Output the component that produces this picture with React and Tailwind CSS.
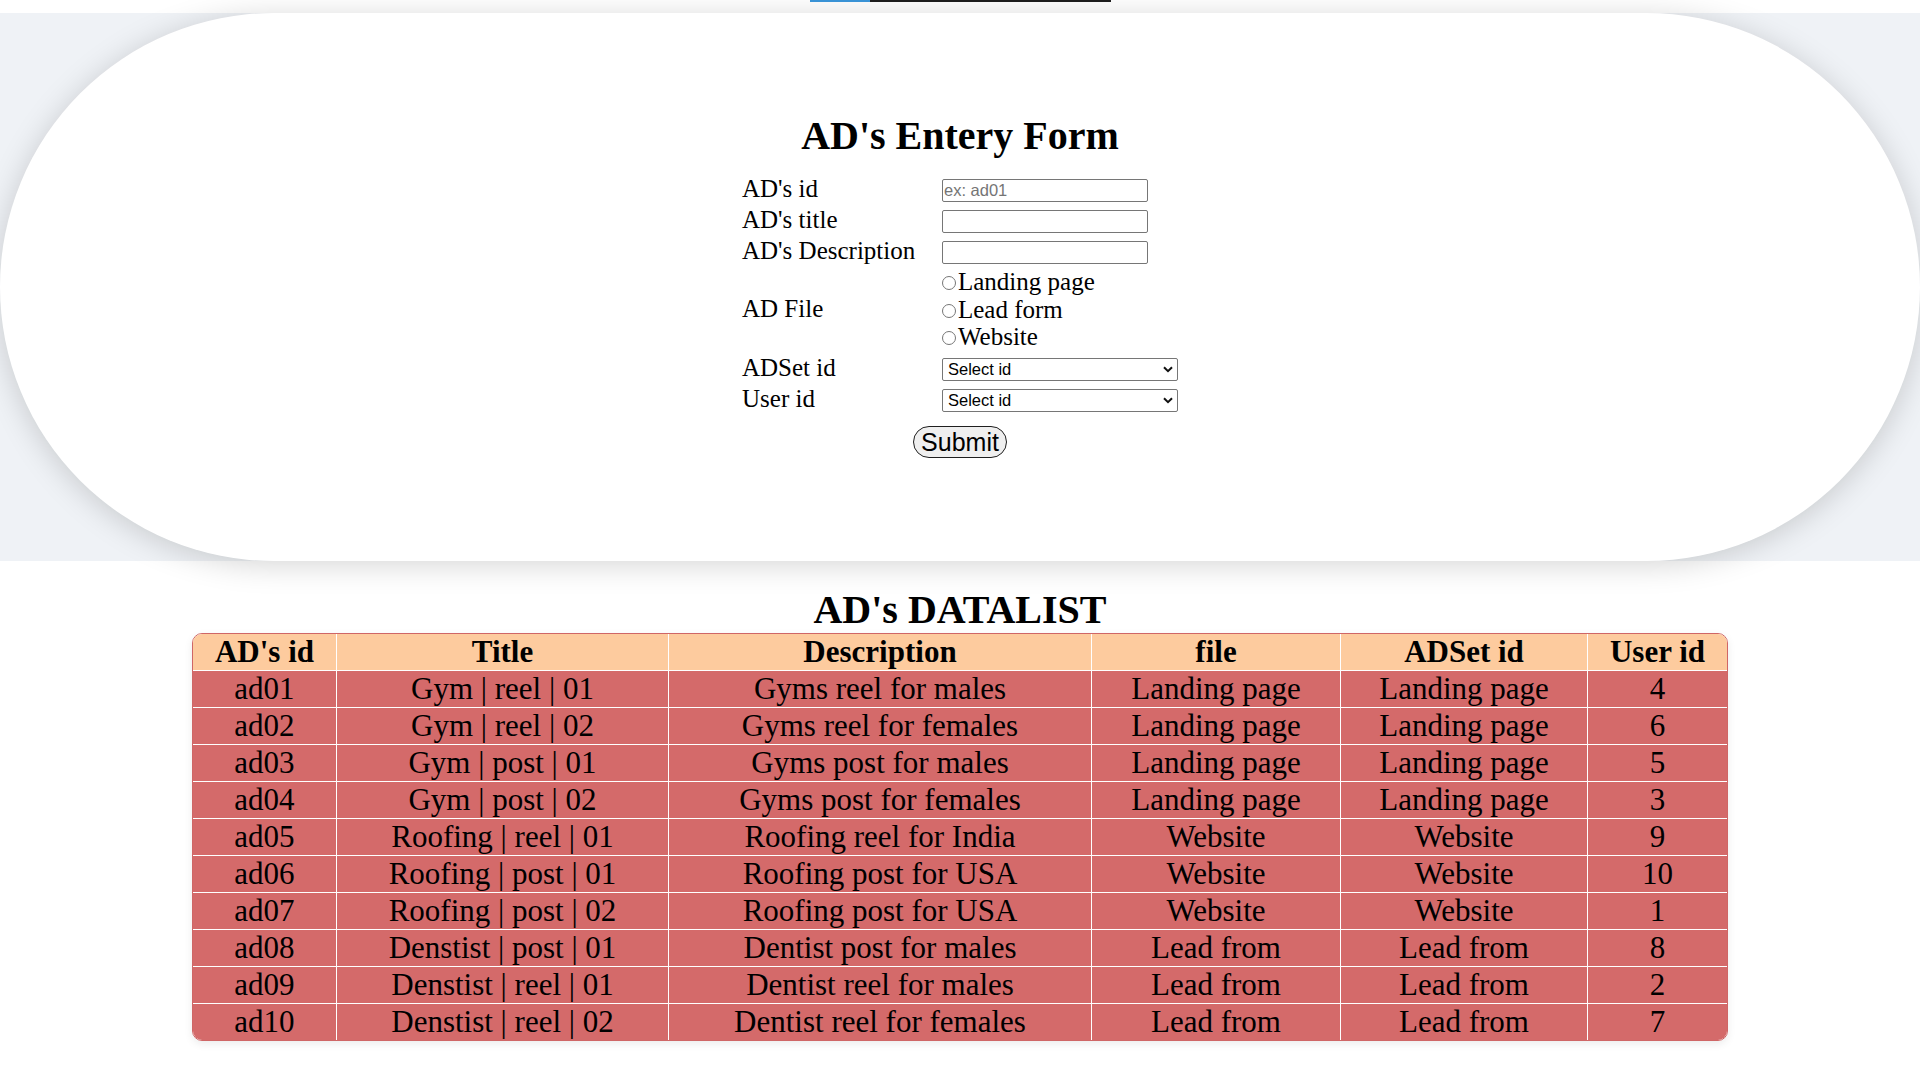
import { useState } from 'react'

const ROWS = [
  ['ad01', 'Gym | reel | 01', 'Gyms reel for males', 'Landing page', 'Landing page', '4'],
  ['ad02', 'Gym | reel | 02', 'Gyms reel for females', 'Landing page', 'Landing page', '6'],
  ['ad03', 'Gym | post | 01', 'Gyms post for males', 'Landing page', 'Landing page', '5'],
  ['ad04', 'Gym | post | 02', 'Gyms post for females', 'Landing page', 'Landing page', '3'],
  ['ad05', 'Roofing | reel | 01', 'Roofing reel for India', 'Website', 'Website', '9'],
  ['ad06', 'Roofing | post | 01', 'Roofing post for USA', 'Website', 'Website', '10'],
  ['ad07', 'Roofing | post | 02', 'Roofing post for USA', 'Website', 'Website', '1'],
  ['ad08', 'Denstist | post | 01', 'Dentist post for males', 'Lead from', 'Lead from', '8'],
  ['ad09', 'Denstist | reel | 01', 'Dentist reel for males', 'Lead from', 'Lead from', '2'],
  ['ad10', 'Denstist | reel | 02', 'Dentist reel for females', 'Lead from', 'Lead from', '7'],
]

const HEADERS = ["AD's id", 'Title', 'Description', 'file', 'ADSet id', 'User id']
const COLS = [144, 332, 423, 249, 247, 139]

function TextField({ placeholder }) {
  return (
    <input
      type="text"
      placeholder={placeholder}
      className="block w-[206px] h-[23px] m-0 px-[1px] border border-[#767676] rounded-[2px] bg-white font-['Liberation_Sans',Arial,sans-serif] text-[16.5px] text-black placeholder:text-[#757575] outline-none"
    />
  )
}

function SelectField() {
  return (
    <div className="relative w-[236px] h-[23px]">
      <select className="block appearance-none w-full h-full m-0 pl-[5px] border border-[#767676] rounded-[2px] bg-white font-['Liberation_Sans',Arial,sans-serif] text-[16.5px] leading-[21px] text-black outline-none">
        <option>Select id</option>
      </select>
      {/* chevron */}
      <svg className="absolute right-[5px] top-[8px] pointer-events-none" width="10" height="7" viewBox="0 0 10 7">
        <path d="M1 1.2l4 4 4-4" fill="none" stroke="#111" strokeWidth="2" />
      </svg>
    </div>
  )
}

export default function App() {
  const [file, setFile] = useState('')

  return (
    <div className="min-h-screen bg-white text-black font-['Liberation_Serif','Times_New_Roman',serif]">
      {/* top strip */}
      <div className="h-[13px] flex justify-center">
        <div className="w-[301px] h-[2px] flex">
          <div className="w-[60px] bg-[#3a93d6]" />
          <div className="flex-1 bg-[#1e1e1e]" />
        </div>
      </div>

      {/* Entry form */}
      <section className="bg-[#eff2f6]">
        <div className="h-[548px] rounded-full bg-white shadow-[0_4px_30px_rgba(0,0,0,0.17)] flex flex-col items-center pt-[101px]">
          <h1 className="text-[40px] font-bold leading-[44px]">AD's Entery Form</h1>

          <form className="mt-[17px] w-[436px] flex flex-col text-[25px]" onSubmit={e => e.preventDefault()}>
            <div className="h-[31px] flex items-center">
              <label className="w-[200px] mb-[4px]">AD's id</label>
              <TextField placeholder="ex: ad01" />
            </div>
            <div className="h-[31px] flex items-center">
              <label className="w-[200px] mb-[4px]">AD's title</label>
              <TextField />
            </div>
            <div className="h-[31px] flex items-center">
              <label className="w-[200px] mb-[4px]">AD's Description</label>
              <TextField />
            </div>

            <div className="flex items-center">
              <label className="w-[200px] mb-[2px]">AD File</label>
              <div className="flex flex-col">
                {['Landing page', 'Lead form', 'Website'].map(opt => (
                  <label key={opt} className="leading-[27.5px] whitespace-nowrap">
                    <input
                      type="radio"
                      name="file"
                      checked={file === opt}
                      onChange={() => setFile(opt)}
                      className="appearance-none inline-block m-0 mr-[2px] w-[14px] h-[14px] rounded-full border border-[#767676] bg-white align-baseline checked:border-[4px] checked:border-[#1a73e8]"
                    />
                    {opt}
                  </label>
                ))}
              </div>
            </div>

            <div className="h-[31px] mt-[3.5px] flex items-center">
              <label className="w-[200px] mb-[4px]">ADSet id</label>
              <SelectField />
            </div>
            <div className="h-[31px] flex items-center">
              <label className="w-[200px] mb-[4px]">User id</label>
              <SelectField />
            </div>

            <button
              type="submit"
              className="self-center mt-[10px] h-[32px] px-[7px] rounded-full border-[1.5px] border-[#1f1f1f] bg-[#efefef] font-['Liberation_Sans',Arial,sans-serif] text-[25px] leading-none text-black"
            >
              Submit
            </button>
          </form>
        </div>
      </section>

      {/* Data list */}
      <h2 className="mt-[27px] text-center text-[40px] font-bold leading-[44px]">AD's DATALIST</h2>

      <div className="mx-auto mt-[1px] w-[1536px] rounded-[10px] overflow-hidden border border-[#cf6666] shadow-[0_3px_8px_rgba(0,0,0,0.08)]">
        <table className="w-full table-fixed border-separate border-spacing-0 text-[31px] text-center">
          <colgroup>
            {COLS.map((w, i) => <col key={i} style={{ width: w }} />)}
          </colgroup>
          <thead>
            <tr className="bg-[#fdcb9e]">
              {HEADERS.map((h, i) => (
                <th
                  key={h}
                  className={`p-0 font-bold leading-[36px] border-b border-white ${i < 5 ? 'border-r' : ''}`}
                >
                  {h}
                </th>
              ))}
            </tr>
          </thead>
          <tbody className="bg-[#d46a6a]">
            {ROWS.map((row, r) => (
              <tr key={row[0]}>
                {row.map((cell, i) => (
                  <td
                    key={i}
                    className={`p-0 leading-[36px] whitespace-nowrap border-white ${i < 5 ? 'border-r' : ''} ${r < 9 ? 'border-b' : ''}`}
                  >
                    {cell}
                  </td>
                ))}
              </tr>
            ))}
          </tbody>
        </table>
      </div>
    </div>
  )
}
